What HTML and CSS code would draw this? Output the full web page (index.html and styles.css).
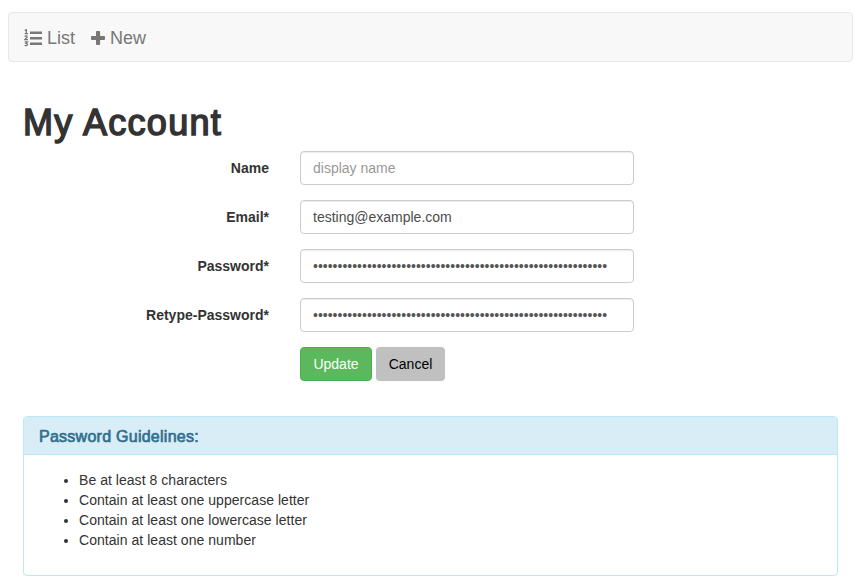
FILE: index.html
```html
<!DOCTYPE html>
<html lang="en">
<head>
<meta charset="utf-8">
<title>My Account</title>
<link rel="stylesheet" href="styles.css">
</head>
<body>
<nav class="navbar">
  <a class="nav-link" href="#"><svg class="icon icon-list" viewBox="0 0 18 18"><path d="M6 2.500h12v2.500H6zM6 8h12v2.500H6zM6 13.500h12V16H6z" fill="currentColor"/><path d="M.8 1.500L2.300.7v4M.7 4.700h3.200M.6 7.500c1-1 2.800-.6 2.500.6L.8 10.600h3.200M.7 12.800h2.700L2 14.400c2.600.1 1.800 3-1.400 2" fill="none" stroke="currentColor" stroke-width="1.300"/></svg><span>List</span></a>
  <a class="nav-link" href="#"><svg class="icon icon-plus" viewBox="0 0 14 18"><path d="M5.900 2h2.300q.9 0 .9.900v4h4q.9 0 .9.900v2.300q0 .9-.9.900h-4v4q0 .9-.9.900H5.900q-.9 0-.9-.9v-4H.9Q0 11 0 10.100V7.800q0-.9.900-.9H5v-4Q5 2 5.900 2z" fill="currentColor"/></svg><span>New</span></a>
</nav>
<main class="container">
  <h1 class="title">My Account</h1>
  <form class="form">
    <label class="label" for="name">Name</label>
    <input class="control" id="name" type="text" placeholder="display name">
    <label class="label" for="email">Email*</label>
    <input class="control control-email" id="email" type="text" value="testing@example.com">
    <label class="label" for="password">Password*</label>
    <input class="control" id="password" type="password" value="000000000000000000000000000000000000000000000000000000000000">
    <label class="label" for="retype">Retype-Password*</label>
    <input class="control" id="retype" type="password" value="000000000000000000000000000000000000000000000000000000000000">
    <div class="actions">
      <button class="btn btn-update" type="button">Update</button>
      <button class="btn btn-cancel" type="button">Cancel</button>
    </div>
  </form>
  <section class="panel">
    <h3 class="panel-heading">Password Guidelines:</h3>
    <ul class="rules">
      <li>Be at least 8 characters</li>
      <li>Contain at least one uppercase letter</li>
      <li>Contain at least one lowercase letter</li>
      <li>Contain at least one number</li>
    </ul>
  </section>
</main>
</body>
</html>
```
FILE: styles.css
```css
* { box-sizing: border-box; }
body {
  margin: 0;
  padding: 12px 8px 0;
  background: #fff;
  color: #333;
  font: 14px/20px "Liberation Sans", Arial, sans-serif;
}
.navbar {
  display: flex;
  height: 50px;
  padding: 2px 15px 0;
  border: 1px solid #e7e7e7;
  border-radius: 4px;
  background: #f8f8f8;
}
.nav-link {
  display: flex;
  align-items: center;
  margin-right: 16px;
  color: #777;
  font-size: 18px;
  text-decoration: none;
}
.icon { display: block; height: 18px; flex: none; margin-right: 5px; }
.icon-list { width: 18px; margin-top: -1px; }
.icon-plus { width: 14px; margin-top: -1px; }
.container { padding: 0 15px; }
.title {
  margin: 41px 0 8px;
  font-size: 36px;
  line-height: 40px;
  font-weight: 400;
  letter-spacing: 1.3px;
  -webkit-text-stroke: 1.5px #333;
}
.form {
  display: grid;
  grid-template-columns: 246px 334px;
  column-gap: 31px;
  row-gap: 15px;
}
.label {
  padding-top: 7px;
  text-align: right;
  font-weight: 700;
}
.control {
  width: 334px;
  height: 34px;
  padding: 6px 12px;
  border: 1px solid #ccc;
  border-radius: 4px;
  background: #fff;
  box-shadow: inset 0 1px 1px rgba(0, 0, 0, .075);
  color: #555;
  font: inherit;
}
.control::placeholder { color: #999; opacity: 1; }
.control-email { color: #4c4c4c; }
.actions { grid-column: 2; display: flex; gap: 4px; }
.btn {
  height: 34px;
  padding: 0;
  border: 1px solid transparent;
  border-radius: 4px;
  font: inherit;
}
.btn-update { width: 72px; border-color: #4cae4c; background: #5cb85c; color: #fff; }
.btn-cancel { width: 69px; background: #c0c0c0; color: #000; }
.panel {
  height: 160px;
  margin-top: 35px;
  border: 1px solid #bce8f1;
  border-radius: 4px;
  box-shadow: 0 1px 1px rgba(0, 0, 0, .05);
}
.panel-heading {
  height: 38px;
  margin: 0;
  padding: 10px 15px 8px;
  border-bottom: 1px solid #bce8f1;
  border-radius: 3px 3px 0 0;
  background: #d9edf7;
  color: #31708f;
  font-size: 16px;
  font-weight: 400;
  letter-spacing: .26px;
  -webkit-text-stroke: .7px #31708f;
}
.rules { margin: 15px 0 0; padding: 0 0 0 55px; letter-spacing: .04px; }
```
